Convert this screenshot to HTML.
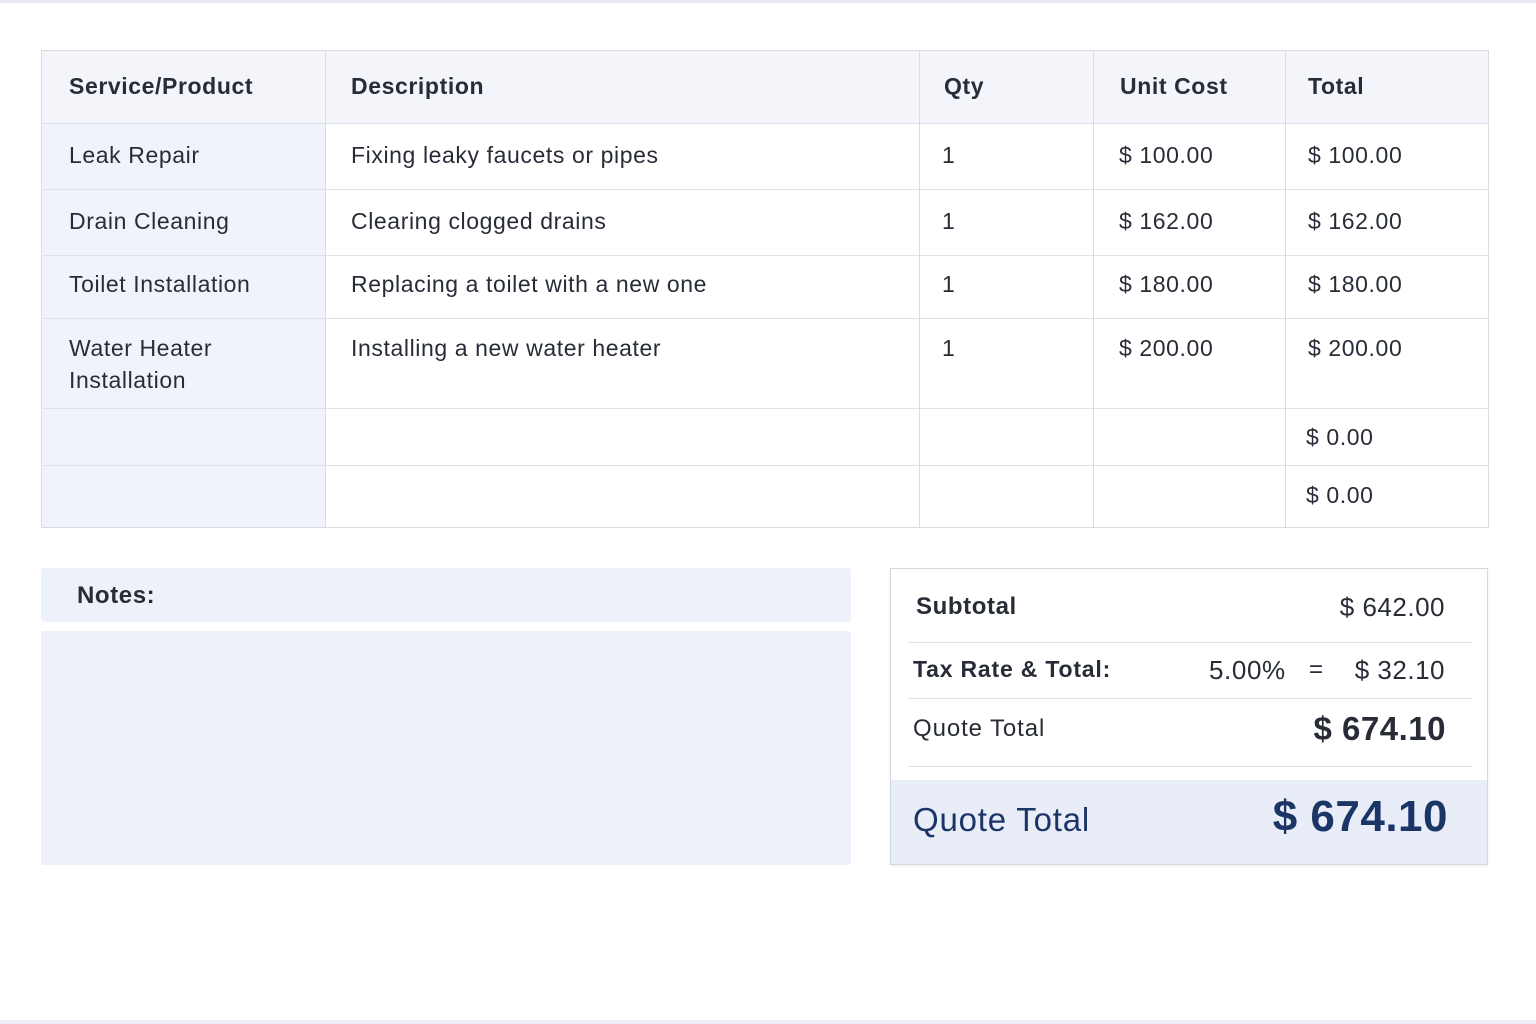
<!DOCTYPE html>
<html><head><meta charset="utf-8"><style>
*{margin:0;padding:0;box-sizing:border-box}
body{width:1536px;height:1024px;background:#fff;font-family:"Liberation Sans",sans-serif;color:#272c37;position:relative;overflow:hidden}
.a{position:absolute}
.t{position:absolute;font-size:23px;white-space:nowrap;letter-spacing:0.6px}
.r{position:absolute;white-space:nowrap;text-align:right;letter-spacing:0.5px}
.b{font-weight:bold}
.hl{position:absolute;height:1px;background:#dde1ea}
.vl{position:absolute;width:1px;background:#d6dbe5}
</style></head><body>
<div class="a" style="left:0;top:0;width:1536px;height:3px;background:#e6e9f0"></div>
<div class="a" style="left:0;top:1020px;width:1536px;height:4px;background:#eceff4"></div>
<div class="a" style="left:41px;top:50px;width:1448px;height:478px;border:1px solid #d6dbe5;background:#fff"></div>
<div class="a" style="left:42px;top:51px;width:1446px;height:72px;background:#f3f5fb"></div>
<div class="a" style="left:42px;top:123px;width:283px;height:404px;background:#f0f3fa"></div>
<div class="hl" style="left:41px;width:1448px;top:123px"></div>
<div class="hl" style="left:41px;width:1448px;top:189px"></div>
<div class="hl" style="left:41px;width:1448px;top:255px"></div>
<div class="hl" style="left:41px;width:1448px;top:318px"></div>
<div class="hl" style="left:41px;width:1448px;top:408px"></div>
<div class="hl" style="left:41px;width:1448px;top:465px"></div>
<div class="vl" style="left:325px;top:50px;height:478px"></div>
<div class="vl" style="left:919px;top:50px;height:478px"></div>
<div class="vl" style="left:1093px;top:50px;height:478px"></div>
<div class="vl" style="left:1285px;top:50px;height:478px"></div>
<div class="t b" style="left:69px;top:73px">Service/Product</div>
<div class="t b" style="left:351px;top:73px">Description</div>
<div class="t b" style="left:944px;top:73px">Qty</div>
<div class="t b" style="left:1120px;top:73px">Unit Cost</div>
<div class="t b" style="left:1308px;top:73px">Total</div>
<div class="t" style="left:69px;top:142px">Leak Repair</div>
<div class="t" style="left:351px;top:142px">Fixing leaky faucets or pipes</div>
<div class="t" style="left:942px;top:142px">1</div>
<div class="t" style="left:1119px;top:142px">$ 100.00</div>
<div class="t" style="left:1308px;top:142px">$ 100.00</div>
<div class="t" style="left:69px;top:208px">Drain Cleaning</div>
<div class="t" style="left:351px;top:208px">Clearing clogged drains</div>
<div class="t" style="left:942px;top:208px">1</div>
<div class="t" style="left:1119px;top:208px">$ 162.00</div>
<div class="t" style="left:1308px;top:208px">$ 162.00</div>
<div class="t" style="left:69px;top:271px">Toilet Installation</div>
<div class="t" style="left:351px;top:271px">Replacing a toilet with a new one</div>
<div class="t" style="left:942px;top:271px">1</div>
<div class="t" style="left:1119px;top:271px">$ 180.00</div>
<div class="t" style="left:1308px;top:271px">$ 180.00</div>
<div class="t" style="left:69px;top:332px;line-height:32px">Water Heater<br>Installation</div>
<div class="t" style="left:351px;top:335px">Installing a new water heater</div>
<div class="t" style="left:942px;top:335px">1</div>
<div class="t" style="left:1119px;top:335px">$ 200.00</div>
<div class="t" style="left:1308px;top:335px">$ 200.00</div>
<div class="t" style="left:1306px;top:424px">$ 0.00</div>
<div class="t" style="left:1306px;top:482px">$ 0.00</div>

<div class="a" style="left:41px;top:568px;width:810px;height:54px;background:#edf1f9;border-radius:3px"></div>
<div class="t b" style="left:77px;top:582px;font-size:24px">Notes:</div>
<div class="a" style="left:41px;top:631px;width:810px;height:234px;background:#eef1f9;border-radius:3px"></div>

<div class="a" style="left:890px;top:568px;width:598px;height:297px;border:1px solid #d3d8e2;background:#fff;box-shadow:0 1px 3px rgba(0,0,0,.08)"></div>
<div class="a" style="left:891px;top:780px;width:596px;height:84px;background:#e8edf8"></div>
<div class="hl" style="left:908px;width:564px;top:642px"></div>
<div class="hl" style="left:908px;width:564px;top:698px"></div>
<div class="hl" style="left:908px;width:564px;top:766px"></div>
<div class="t b" style="left:916px;top:593px;font-size:24px">Subtotal</div>
<div class="r" style="right:91px;top:592px;font-size:26px">$ 642.00</div>
<div class="t b" style="left:913px;top:656px;font-size:23px;letter-spacing:0.8px">Tax Rate &amp; Total:</div>
<div class="t" style="left:1209px;top:655px;font-size:26px">5.00%</div>
<div class="t" style="left:1309px;top:656px;font-size:24px">=</div>
<div class="r" style="right:91px;top:655px;font-size:26px">$ 32.10</div>
<div class="t" style="left:913px;top:715px;font-size:24px;letter-spacing:0.9px">Quote Total</div>
<div class="r b" style="right:90px;top:710px;font-size:33px">$ 674.10</div>
<div class="t" style="left:913px;top:801px;font-size:33px;color:#1b3566;letter-spacing:0.8px">Quote Total</div>
<div class="r b" style="right:88px;top:792px;font-size:44px;color:#1b3566">$ 674.10</div>
</body></html>
